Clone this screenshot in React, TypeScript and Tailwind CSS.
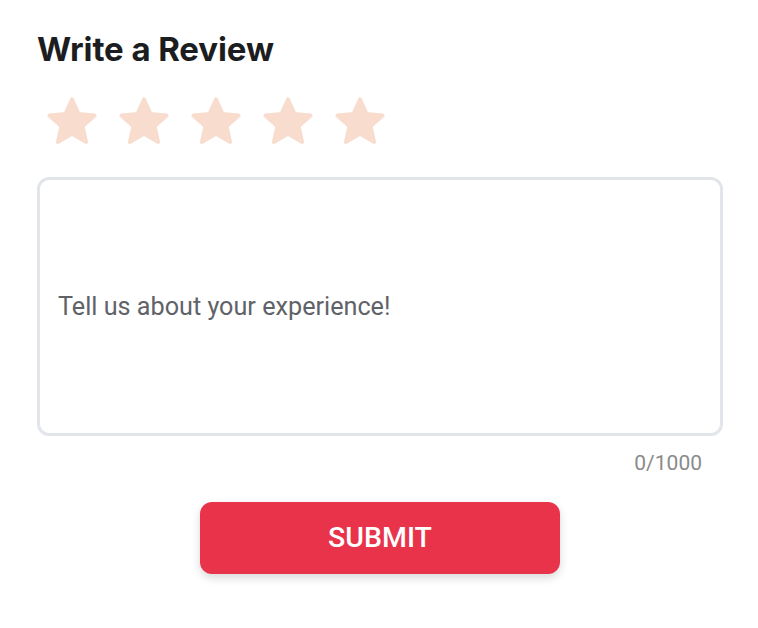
import { useState } from 'react'

const stars = [0, 1, 2, 3, 4]

const Star = () => (
    <svg viewBox="0 0 24 24" className="h-[58px] w-[58px]" aria-hidden="true">
        <path
            fill="#F8DDCF"
            stroke="#F8DDCF"
            strokeWidth="1.6"
            strokeLinejoin="round"
            d="M12 2.6l2.75 6.1 6.65.62-5.02 4.42 1.48 6.52L12 16.86l-5.86 3.4 1.48-6.52-5.02-4.42 6.65-.62z"
        />
    </svg>
)

const App = () => {
    const [text] = useState('')

    return (
        <div className="min-h-[628px] w-[758px] bg-white font-['Roboto',sans-serif]">
            <div className="pl-[37px] pr-[35px] pt-[30px]">
                <h1 className="font-['Inter',sans-serif] text-[33px] font-bold leading-[38px] tracking-[-0.1px] text-[#1c1d20]">
                    Write a Review
                </h1>

                <div className="mt-[25px] flex gap-[14px] pl-[6px]">
                    {stars.map((star) => (
                        <Star key={star} />
                    ))}
                </div>

                <div className="mt-[26px] flex h-[259px] items-center rounded-[12px] border-[3px] border-[#E2E5EA] px-[18px]">
                    <span className="text-[25.2px] leading-none text-[#5F6368]">
                        {text || 'Tell us about your experience!'}
                    </span>
                </div>

                <div className="mt-[15px] pr-[21px] text-right text-[21px] leading-[24px] text-[#8A8A8A]">0/1000</div>

                <div className="mt-[27px] flex justify-center">
                    <button className="h-[72px] w-[360px] rounded-[12px] bg-[#E8334A] text-[28.5px] font-medium text-white shadow-[0_4px_10px_rgba(0,0,0,0.15)]">
                        SUBMIT
                    </button>
                </div>
            </div>
        </div>
    )
}

export default App
